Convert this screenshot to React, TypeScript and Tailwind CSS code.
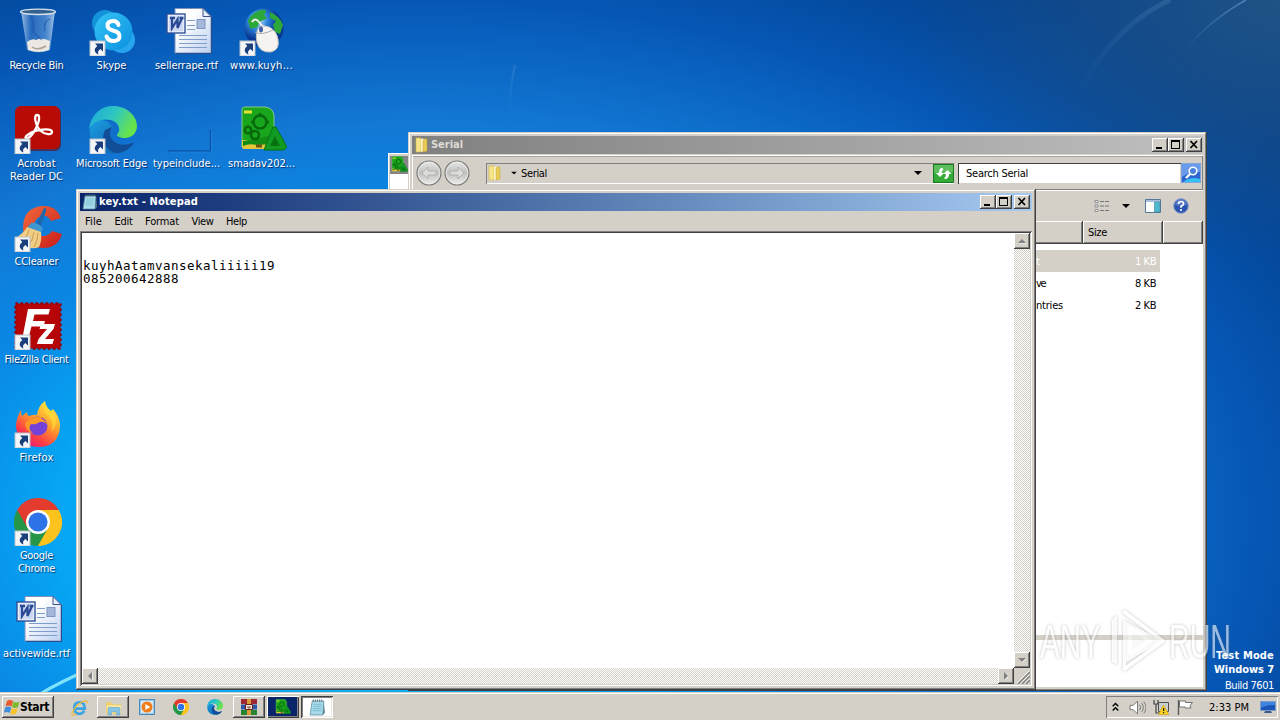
import { useLayoutEffect, useRef, type ReactNode } from "react";

const ui = "font-['DejaVu_Sans_Condensed','DejaVu_Sans',sans-serif] [font-stretch:condensed]";
const raised = "bg-[#d4d0c8] shadow-[inset_-1px_-1px_#404040,inset_1px_1px_#fff,inset_-2px_-2px_#808080]";
const sunken = "shadow-[inset_1px_1px_#808080,inset_-1px_-1px_#fff]";
const frame = "bg-[#d4d0c8] p-1 shadow-[inset_-1px_-1px_#404040,inset_1px_1px_#d4d0c8,inset_-2px_-2px_#808080,inset_2px_2px_#fff]";
const checker = "bg-[repeating-conic-gradient(#d4d0c8_0_25%,#fff_0_50%)] bg-[length:2px_2px]";

/* Text whose letter spacing is adjusted so that it spans w pixels. */
function Fit({ w, children, className = "" }: { w: number; children: string; className?: string }) {
  const ref = useRef<HTMLSpanElement>(null);
  useLayoutEffect(() => {
    const el = ref.current;
    if (!el) return;
    el.style.letterSpacing = "0px";
    const natural = el.getBoundingClientRect().width;
    el.style.letterSpacing = `${(w - natural) / children.length}px`;
  }, [w, children]);
  return (
    <span ref={ref} className={`inline-block shrink-0 whitespace-pre ${className}`}>
      {children}
    </span>
  );
}

function Shortcut() {
  return (
    <g transform="translate(1 33)">
      <rect width="15" height="15" fill="#f4f6f8" stroke="#b9c2cc" strokeWidth="1" />
      <path d="M5 2.5h8v8l-2.6-2.4C8.2 9.6 7.6 11 8.400 13.500 4 12 3.500 8 7.300 5.100z" fill="#1b3f7d" />
    </g>
  );
}

function RecycleBin() {
  return (
    <svg viewBox="0 0 48 48" className="size-12">
      <defs>
        <linearGradient id="bin" x1="0" x2="1">
          <stop offset="0" stopColor="#c3dcf3" stopOpacity=".8" />
          <stop offset=".3" stopColor="#3a78c8" stopOpacity=".6" />
          <stop offset=".7" stopColor="#7fb0e4" stopOpacity=".5" />
          <stop offset="1" stopColor="#b9d6f2" stopOpacity=".85" />
        </linearGradient>
      </defs>
      <path d="M7 3h34l-5 39q-11 5-23 0z" fill="url(#bin)" />
      <path d="M13 34q5-4 9-2 6-3 14 1l-1 9q-11 4-21 0z" fill="#ece9e4" />
      <path d="M18 39q6 4 14-1" stroke="#a99f92" strokeWidth="1.500" fill="none" />
      <path d="M17 8q4 7 2 16l9 8M36 11q-7 2-5 12" stroke="#1d55a8" strokeWidth="1.500" fill="none" opacity=".6" />
      <ellipse cx="24" cy="3.800" rx="17.500" ry="2.700" fill="#34618f" stroke="#d6e0ea" strokeWidth="1.400" />
    </svg>
  );
}

function Skype() {
  return (
    <svg viewBox="0 0 48 48" className="size-12">
      <defs>
        <linearGradient id="sky" x1="0" x2="1" y2="1">
          <stop offset="0" stopColor="#35c5f5" />
          <stop offset="1" stopColor="#0a8fe0" />
        </linearGradient>
      </defs>
      <circle cx="16" cy="15" r="13" fill="#1593da" />
      <circle cx="33" cy="32" r="13" fill="#27a6ee" />
      <circle cx="24.500" cy="23.500" r="19" fill="url(#sky)" />
      <path d="M29.500 17q-1-4-5.500-4-5.500 0-5.500 4.500 0 3.500 5.500 5 6.500 1.500 6.500 5.500 0 5-6 5-5.500 0-7-4.500" fill="none" stroke="#fff" strokeWidth="4" strokeLinecap="round" />
      <Shortcut />
    </svg>
  );
}

function WordDoc() {
  return (
    <svg viewBox="0 0 48 48" className="size-12">
      <defs>
        <linearGradient id="page" x1="0" x2="1" y2="1">
          <stop offset=".3" stopColor="#fff" />
          <stop offset="1" stopColor="#bccff0" />
        </linearGradient>
      </defs>
      <path d="M11 .5h28l8 8V45H11z" fill="url(#page)" stroke="#7d93bd" />
      <path d="M39 .5v8h8z" fill="#e6eefb" stroke="#3c5588" />
      <path d="M47.500 9v36.500H12" stroke="#2c4c8a" fill="none" />
      <path d="M23 12.500h8M23 17.500h8M23 21.500h8M15 27.500h28M15 31.500h28M15 35.500h28M15 39.500h28" stroke="#7f9fc9" />
      <rect x="33" y="11.500" width="8" height="9" fill="#a5b8dc" stroke="#7f95c0" />
      <rect x="3" y="6" width="18" height="19" fill="#fff" stroke="#2e4f9a" strokeWidth="1.400" />
      <rect x="4.500" y="7.500" width="15" height="16" fill="#cdd9f1" />
      <path d="M6 10h5M8 10l0 10 5.500-8.500v8.500l4.500-10M15.500 10h4" stroke="#2b4a96" strokeWidth="2.300" fill="none" />
    </svg>
  );
}

function GlobeMouse() {
  return (
    <svg viewBox="0 0 48 48" className="size-12">
      <defs>
        <radialGradient id="globe" cx=".35" cy=".3">
          <stop offset="0" stopColor="#bfe6ff" />
          <stop offset=".5" stopColor="#2b82d9" />
          <stop offset="1" stopColor="#0a3690" />
        </radialGradient>
      </defs>
      <circle cx="25" cy="20" r="19.500" fill="url(#globe)" />
      <path d="M9 13Q13 3 25 1.500q4 2 0 5l3 4-7 3-3 6-7 1zM31 4q10 4 13 13l-3 9-5-2-2-7 3-4-6-3z" fill="#2ca83b" />
      <path d="M13 14q3-5 7 0 3 5 8 5" stroke="#f0f0ec" strokeWidth="2" fill="none" />
      <path d="M20 19q5-2 10 0 7 3 9 12 2 11-7 13-11 1-14-9-2-10 2-16z" fill="#f4f3f0" stroke="#c4c2c0" />
      <path d="M16 24q6 4 18-2" stroke="#aaa" fill="none" />
      <ellipse cx="22" cy="21.500" rx="2" ry="3" fill="#4263a8" />
      <Shortcut />
    </svg>
  );
}

function Acrobat() {
  return (
    <svg viewBox="0 0 48 48" className="size-12">
      <rect x="2" y="1" width="45" height="44" rx="6" fill="#6e0906" opacity=".6" />
      <rect x="1" y="0" width="45" height="43" rx="6" fill="#b80b05" />
      <path d="M23 9c-4 0-1 12 4 16 4 4 11 4 11 1 0-5-18-2-23 2-5 3-4 5-1 4 5-2 12-16 11-21 0-1-1-2-2-2z" fill="none" stroke="#fff" strokeWidth="2.300" strokeLinejoin="round" />
      <Shortcut />
    </svg>
  );
}

function Edge({ small = false }: { small?: boolean }) {
  return (
    <svg viewBox="0 0 48 48" className={small ? "size-4" : "size-12"}>
      <defs>
        <linearGradient id="edgeTop" x1="0" x2="1" y2=".4">
          <stop offset="0" stopColor="#1aa7dd" />
          <stop offset=".55" stopColor="#2fc7c0" />
          <stop offset="1" stopColor="#67e34c" />
        </linearGradient>
        <linearGradient id="edgeLow" x1="0" x2="1" y1="0" y2="1">
          <stop offset="0" stopColor="#1b9de2" />
          <stop offset="1" stopColor="#0c59a4" />
        </linearGradient>
      </defs>
      <path d="M1 22C-1 36 10 47.500 24 47.500c9 0 15-3 20-9 1-1 0-2-1-1-12 5-22-2-22-9 0-5 3-7 3-7C18 12 5 11 1 22z" fill="url(#edgeLow)" />
      <path d="M16 24c-5 10 1 22 13 23 7-1 12-5 15-9 1-1 0-2-1-1-12 5-22-2-22-9 0-4 2-6 2-7z" fill="#124e97" />
      <path d="M0 23C2 8 12 0 24 0c14 0 24 10 24 20 0 7-5 12-12 12-5 0-8-2-8-3s3-3 2-7C29 12 8 9 0 23z" fill="url(#edgeTop)" />
      {!small && <Shortcut />}
    </svg>
  );
}

function GhostIcon() {
  return (
    <svg viewBox="0 0 48 48" className="size-12">
      <path d="M46.500 24v21H4" fill="none" stroke="#0751a8" strokeWidth="1.300" />
      <path d="M47.500 25v21H5" fill="none" stroke="#2a8ce0" strokeWidth=".6" />
    </svg>
  );
}

function Smadav({ className = "size-12" }: { className?: string }) {
  return (
    <svg viewBox="0 0 48 48" className={className}>
      <path d="M3 3q0-2 3-2h20q9 1 9 10v31H5q-3 0-2-4z" fill="#19a51c" stroke="#85c888" />
      <path d="M3 34h25v9H5q-2 0-2-3z" fill="#e5c73c" />
      <path d="M4 35q15-2 25-5l5 2v6l-16 1q-8-2-14 1z" fill="#118d16" />
      <g fill="none" stroke="#08680c" strokeWidth="2.500">
        <circle cx="21" cy="16" r="6.500" />
        <circle cx="9" cy="24" r="3.200" />
        <circle cx="16" cy="29" r="4" />
        <path d="M21 7v3M12 16h3M27 16h3" />
      </g>
      <path d="M5 6h8" stroke="#e9df37" strokeWidth="3" />
      <path d="M25 44 34 21h3l11 20-3 3z" fill="#119b22" stroke="#087011" />
      <path d="M31 40l5-10 5 10z" fill="#08720f" />
      <path d="M17 40h6" stroke="#6d5310" strokeWidth="3" />
    </svg>
  );
}

function CCleaner() {
  return (
    <svg viewBox="0 0 48 48" className="size-12">
      <defs>
        <linearGradient id="cc" x1="0" x2="1" y2="1">
          <stop offset="0" stopColor="#f26a3c" />
          <stop offset="1" stopColor="#c91c18" />
        </linearGradient>
      </defs>
      <path d="M47 14 37 17q-3-6-9-5-8 2-8 11 1 9 9 9 6 0 9-5l10 3q-4 14-19 14-19-1-20-20Q9 4 28 2q14-1 19 12z" fill="url(#cc)" />
      <path d="M30 4q3 0 2 3l-6 18-5-2z" fill="#1f68ac" />
      <path d="M17 19q6-1 12 5l-2 5-14-5z" fill="#3f97d0" />
      <path d="M13 23 27 28q1 9-2 15-4 2-9 1Q8 42 1 34q8-4 12-11z" fill="#f1cc85" />
      <path d="M15 26q-2 8-8 11M20 28q-1 9-6 14M24 29q0 8-4 14" stroke="#c99b50" fill="none" />
      <Shortcut />
    </svg>
  );
}

function FileZilla() {
  return (
    <svg viewBox="0 0 48 48" className="size-12">
      <rect x="1.500" y="1.500" width="45" height="45" fill="#b40406" stroke="#8d0305" strokeWidth="2.400" strokeDasharray="2.600 2.400" />
      <rect x="2.500" y="2.500" width="43" height="43" fill="#b50507" />
      <path d="M14 7h22l-1.500 5.500H20.500L19 19h12l-1.500 5.500H17.500L14 38H8zM27 22h14l-1.500 5L31 37h9l-1.500 5H23l1.500-5 8.500-10h-7.500z" fill="#fff" />
      <Shortcut />
    </svg>
  );
}

function Firefox() {
  return (
    <svg viewBox="0 0 48 48" className="size-12">
      <defs>
        <linearGradient id="fox" x1=".8" x2=".2" y1="0" y2="1">
          <stop offset="0" stopColor="#fff04a" />
          <stop offset=".4" stopColor="#ffa22b" />
          <stop offset=".75" stopColor="#ff3c46" />
          <stop offset="1" stopColor="#d91580" />
        </linearGradient>
      </defs>
      <path d="M7 10q0 4 1 6l5-4q0 3 2 4 5-2 8-1 1-9 8-14 1 7 6 10l2-2q7 8 7 17-1 21-22 21Q4 46 2 27q0-9 5-17z" fill="url(#fox)" />
      <circle cx="24" cy="26" r="9.500" fill="#7542d8" />
      <path d="M15 20q7-5 14-3-2 0-2 1 4 2 6 6-5-4-9-1-3 2-7 1-4 5 2 9-8-2-8-10z" fill="#ff9926" />
      <path d="M31 4q-2 7 3 12 7 7 3 16 9-10 2-20-6-3-8-8z" fill="#ffd936" opacity=".75" />
      <Shortcut />
    </svg>
  );
}

function Chrome({ small = false }: { small?: boolean }) {
  return (
    <svg viewBox="0 0 48 48" className={small ? "size-4" : "size-12"}>
      <path d="M24 24 3.200 12A24 24 0 0 1 44.800 12z" fill="#e33b2e" />
      <path d="M24 24 44.800 12A24 24 0 0 1 24 48z" fill="#fcc31e" />
      <path d="M24 24 24 48A24 24 0 0 1 3.200 12z" fill="#269746" />
      <path d="M24 12h20.800L40 24 24 24z" fill="#fcc31e" />
      <path d="M3.200 12 13.600 30 24 24 24 12 18 8z" fill="#e33b2e" />
      <path d="M34.400 30 24 48 15 46 13.600 30z" fill="#269746" />
      <path d="M34.400 30 24 48 31 47 40 41 42 20z" fill="#fcc31e" />
      <circle cx="24" cy="24" r="12" fill="#fff" />
      <circle cx="24" cy="24" r="9.600" fill="#2f73e8" />
      {!small && <Shortcut />}
    </svg>
  );
}

type Item = { cell: string; icon: ReactNode; lines: [string, number][]; wide?: boolean };
const items: Item[] = [
  { cell: "col-start-1 row-start-1", icon: <RecycleBin />, lines: [["Recycle Bin", 54]] },
  { cell: "col-start-2 row-start-1", icon: <Skype />, lines: [["Skype", 30]] },
  { cell: "col-start-3 row-start-1", icon: <WordDoc />, lines: [["sellerrape.rtf", 63]] },
  { cell: "col-start-4 row-start-1", icon: <GlobeMouse />, lines: [["www.kuyh...", 63]] },
  { cell: "col-start-1 row-start-2", icon: <Acrobat />, lines: [["Acrobat", 38], ["Reader DC", 53]] },
  { cell: "col-start-2 row-start-2", icon: <Edge />, lines: [["Microsoft Edge", 71]] },
  { cell: "col-start-3 row-start-2", icon: <GhostIcon />, lines: [["typeinclude...", 67]] },
  { cell: "col-start-4 row-start-2", icon: <Smadav />, lines: [["smadav202...", 67]] },
  { cell: "col-start-1 row-start-3", icon: <CCleaner />, lines: [["CCleaner", 44]] },
  { cell: "col-start-1 row-start-4", icon: <FileZilla />, lines: [["FileZilla Client", 64]] },
  { cell: "col-start-1 row-start-5", icon: <Firefox />, lines: [["Firefox", 34]] },
  { cell: "col-start-1 row-start-6", icon: <Chrome />, lines: [["Google", 33], ["Chrome", 37]] },
  { cell: "col-start-1 row-start-7", icon: <WordDoc />, lines: [["activewide.rtf", 67]] },
];

function Desktop() {
  return (
    <div className="-ml-px grid w-[300px] grid-cols-[repeat(4,75px)] grid-rows-[repeat(7,98px)] pt-2">
      {items.map((it) => (
        <div key={it.lines[0][0]} className={`flex flex-col items-center ${it.cell}`}>
          <div className="h-[50.500px] pl-[2px]">{it.icon}</div>
          {it.lines.map(([t, w]) => (
            <Fit key={t} w={w} className="h-[13px] leading-[13px] text-white [text-shadow:1px_1px_1px_rgba(0,20,70,.75)]">
              {t}
            </Fit>
          ))}
        </div>
      ))}
    </div>
  );
}

function Captions() {
  const b = `flex h-[14px] w-4 items-center justify-center ${raised}`;
  return (
    <div className="ml-auto flex">
      <div className={b}>
        <svg viewBox="0 0 16 14" className="h-[14px] w-4"><path d="M4 9h6v2H4z" /></svg>
      </div>
      <div className={b}>
        <svg viewBox="0 0 16 14" className="h-[14px] w-4" shapeRendering="crispEdges"><path fillRule="evenodd" d="M3 2h9v9H3zM4 4h7v6H4z" /></svg>
      </div>
      <div className={`ml-[2px] ${b}`}>
        <svg viewBox="0 0 16 14" className="h-[14px] w-4"><path d="M4.500 3 11 10M11 3 4.500 10" stroke="#000" strokeWidth="1.700" /></svg>
      </div>
    </div>
  );
}

function Folder() {
  return (
    <svg viewBox="0 0 16 16" className="size-4 shrink-0">
      <path d="M2 1h5v14H2z" fill="#f5e489" stroke="#d0b344" strokeWidth=".6" />
      <path d="M7 2q2-1 3 0v12l-3 1z" fill="#fdf6c5" />
      <path d="M10 2h3v12l-4 1V4z" fill="#e8ca55" stroke="#c6a63b" strokeWidth=".5" />
    </svg>
  );
}

function NoteIcon({ className = "size-4" }: { className?: string }) {
  return (
    <svg viewBox="0 0 16 16" className={`shrink-0 ${className}`}>
      <path d="M3 2h11l-1 13H1z" fill="#a9dcea" stroke="#55889b" strokeWidth=".7" />
      <path d="M4 5h8M4 7h8M3.500 9h8M3.500 11h8" stroke="#6fb4cb" strokeWidth=".7" />
      <path d="M4 .5v2M6 .5v2M8 .5v2M10 .5v2M12 .5v2" stroke="#5f7680" />
      <path d="M14 3 15 13 13 15z" fill="#5a8493" />
    </svg>
  );
}

function Arrow({ dir }: { dir: "u" | "d" | "l" | "r" }) {
  const d = { u: "M4 10h8l-4-4z", d: "M4 6h8l-4 4z", l: "M10 4v8l-4-4z", r: "M6 4v8l4-4z" }[dir];
  return (
    <div className={`size-4 shrink-0 ${raised}`}>
      <svg viewBox="0 0 16 16" className="size-4">
        <path d={d} fill="#fff" transform="translate(.6 .6)" />
        <path d={d} fill="#808080" />
      </svg>
    </div>
  );
}

function Down({ className = "" }: { className?: string }) {
  return <svg viewBox="0 0 8 4" className={`h-1 w-2 shrink-0 ${className}`}><path d="M0 0h8L4 4z" /></svg>;
}

function NavButton({ flip = false }: { flip?: boolean }) {
  return (
    <svg viewBox="0 0 28 28" className="size-7">
      <defs>
        <linearGradient id="nav" x2="0" y2="1">
          <stop offset="0" stopColor="#e9e9e7" />
          <stop offset=".5" stopColor="#bfbfbd" />
          <stop offset="1" stopColor="#efefed" />
        </linearGradient>
      </defs>
      <circle cx="14" cy="14" r="12" fill="url(#nav)" stroke="#7c7c7a" strokeWidth="1.200" />
      <circle cx="14" cy="14" r="10.800" fill="none" stroke="#f2f2f0" strokeWidth=".7" />
      <path d="M7 14l6-6v4h8v4h-8v4z" fill="#dcdcda" stroke="#b0b0ae" transform={flip ? "rotate(180 14 14)" : undefined} />
    </svg>
  );
}

function Explorer() {
  return (
    <div className={`absolute left-[408px] top-[132px] flex h-[559px] w-[799px] flex-col ${frame}`}>
      <div className="flex h-[18px] shrink-0 items-center bg-linear-to-r from-[#808080] to-[#c0c0c0] pl-[2px] pr-px">
        <Folder />
        <Fit w={32} className="ml-px font-bold leading-[18px] text-[#dedbd5]">Serial</Fit>
        <Captions />
      </div>
      <div className="mt-px flex h-[35px] shrink-0 items-center pl-[3px] pr-px pt-px shadow-[inset_1px_1px_#fff,inset_-1px_-1px_#808080,inset_0_2px_#a7a39b,0_1px_#fff]">
        <NavButton />
        <NavButton flip />
        <div className={`ml-[15px] flex h-[21px] w-[468px] items-center pl-px ${sunken}`}>
          <Folder />
          <Down className="ml-[7px] scale-75" />
          <Fit w={26} className="ml-[3px]">Serial</Fit>
          <Down className="ml-auto" />
          <svg viewBox="0 0 21 19" className="ml-[11px] h-[19px] w-[21px]">
            <rect x=".5" y=".5" width="20" height="18" fill="#35aa38" stroke="#187a1b" />
            <path d="M1 1h19v7q-10 4-19 1z" fill="#7acb78" opacity=".6" />
            <path d="M9 4q-3 0-3 5H3l4 4 4-4H8.500q0-2 2-4zM12 15q4 0 4-5h2.500l-4-4-4 4H13q0 3-2 4z" fill="#fff" />
          </svg>
        </div>
        <div className="ml-1 flex h-[21px] w-[223px] items-center bg-white pl-2 shadow-[inset_1px_1px_#404040,inset_-1px_-1px_#d4d0c8]">
          <Fit w={62}>Search Serial</Fit>
        </div>
        <svg viewBox="0 0 20 20" className="size-5">
          <rect x=".5" y=".5" width="19" height="19" fill="#2c65d2" stroke="#7fa3dd" />
          <path d="M1 1h18v8Q9 8 1 14z" fill="#699bea" />
          <path d="M2 19q8-6 17-3v3z" fill="#36c0ee" />
          <circle cx="12" cy="8" r="3.800" fill="#4780dd" stroke="#fff" strokeWidth="1.600" />
          <path d="M9 11l-4 4" stroke="#fff" strokeWidth="2.400" />
        </svg>
      </div>
      <div className="flex h-[31px] shrink-0 items-center justify-end pr-[14px]">
        <svg viewBox="0 0 16 14" className="h-[14px] w-4">
          <path d="M1 1.500h3v2H1zM1 6h3v2H1zM1 10.500h3v2H1z" fill="#fff" stroke="#73777c" strokeWidth=".8" />
          <path d="M6 2.500h4M11 2.500h4M6 7h4M11 7h4M6 11.500h4M11 11.500h4" stroke="#73777c" strokeWidth="1" />
        </svg>
        <Down className="ml-3" />
        <svg viewBox="0 0 16 14" className="ml-[15px] h-[14px] w-4">
          <path d="M.5.5h15v13H.5z" fill="#fff" stroke="#53789b" />
          <path d="M1 1h14v2H1z" fill="#a8bfdb" />
          <path d="M9.500 3h5.500v10H9.500z" fill="#4fb9cf" stroke="#46839f" strokeWidth=".6" />
        </svg>
        <svg viewBox="0 0 16 16" className="ml-3 size-4">
          <circle cx="8" cy="8" r="7.300" fill="#2b53b0" stroke="#8298c6" />
          <path d="M2 7a6 6 0 0 1 12 0q-6 2-12 0z" fill="#7290d5" opacity=".6" />
          <path d="M5.500 6q0-2.500 2.600-2.500 2.400 0 2.400 2.200Q10.500 7 8 8.500v1.200" fill="none" stroke="#fff" strokeWidth="1.700" />
          <circle cx="8" cy="12" r="1.100" fill="#fff" />
        </svg>
      </div>
      <div className="flex h-[23px] shrink-0 justify-end leading-[23px]">
        <div className={`grow ${raised}`} />
        <div className={`w-20 pl-[5px] ${raised}`}><Fit w={19}>Size</Fit></div>
        <div className={`w-10 ${raised}`} />
      </div>
      <div className="flex grow flex-col bg-white pl-[624px] pt-[6px]">
        {[["t", "1 KB", 5, 21], ["ve", "8 KB", 9, 21], ["ntries", "2 KB", 27, 21]].map(([name, size, nw, sw], i) => (
          <div
            key={size}
            className={`flex h-[22px] w-[124px] items-center justify-between pr-[4px] ${i === 0 ? "bg-[#d4d0c8] text-white" : ""}`}
          >
            <Fit w={nw as number}>{name as string}</Fit>
            <Fit w={sw as number}>{size as string}</Fit>
          </div>
        ))}
      </div>
      <div className="h-[5px] shrink-0 bg-[#d4d0c8]" />
      <div className="h-[47px] shrink-0 bg-white" />
    </div>
  );
}

const menu: [string, number][] = [["File", 17], ["Edit", 18], ["Format", 34], ["View", 22], ["Help", 21]];

function Notepad() {
  return (
    <div className={`absolute left-[76px] top-[189px] flex h-[501px] w-[960px] flex-col ${frame}`}>
      <div className="flex h-[18px] shrink-0 items-center bg-linear-to-r from-[#0a246a] to-[#a6caf0] pl-[2px] pr-[2px]">
        <NoteIcon />
        <Fit w={99} className="ml-px font-bold leading-[18px] text-white">key.txt - Notepad</Fit>
        <Captions />
      </div>
      <div className="flex h-5 shrink-0 items-center gap-[12.500px] pl-[5px]">
        {menu.map(([t, w]) => <Fit key={t} w={w}>{t}</Fit>)}
      </div>
      <div className="flex min-h-0 grow flex-col p-[2px] shadow-[inset_1px_1px_#808080,inset_-1px_-1px_#fff,inset_2px_2px_#404040,inset_-2px_-2px_#d4d0c8]">
        <div className="flex min-h-0 grow">
          <div className="grow bg-white pl-px pt-[26px] font-['DejaVu_Sans_Mono',monospace] text-[12.500px] leading-[13px]">
            <div><Fit w={192}>kuyhAatamvansekaliiiii19</Fit></div>
            <div><Fit w={96}>085200642888</Fit></div>
          </div>
          <div className={`flex w-4 flex-col justify-between ${checker}`}>
            <Arrow dir="u" />
            <Arrow dir="d" />
          </div>
        </div>
        <div className="flex h-4 shrink-0">
          <div className={`flex grow justify-between ${checker}`}>
            <Arrow dir="l" />
            <Arrow dir="r" />
          </div>
          <svg viewBox="0 0 16 16" className="size-4 bg-[#d4d0c8]">
            <path d="M4 16 16 4M8 16l8-8M12 16l4-4" stroke="#808080" strokeWidth="1.500" />
            <path d="M3 15 15 3M7 15l8-8M11 15l4-4" stroke="#fff" strokeWidth=".8" />
          </svg>
        </div>
      </div>
    </div>
  );
}

function BackWindow() {
  return (
    <div className="absolute left-[388px] top-[153px] h-[300px] w-[300px] bg-[#d4d0c8] pl-[2px] pt-[3px] shadow-[inset_1px_1px_#fff]">
      <div className="h-[18px] bg-[#858585] pl-px"><Smadav className="size-[17px]" /></div>
      <div className="h-[270px] bg-white" />
    </div>
  );
}

function Watermark() {
  return (
    <svg viewBox="0 0 196 68" className="absolute left-[1038px] top-[607px] h-[68px] w-[196px] opacity-60 drop-shadow-[0_0_1.500px_rgba(80,80,80,.6)]">
      <g fill="#fff" fontFamily="'Liberation Sans Narrow','Liberation Sans',sans-serif">
        <text transform="translate(2 51) scale(.62 1)" fontSize="49" textLength="98" lengthAdjust="spacingAndGlyphs">ANY</text>
        <text transform="translate(131 51) scale(.62 1)" fontSize="49" textLength="100" lengthAdjust="spacingAndGlyphs">RUN</text>
      </g>
      <path d="M79 8v49l6 4V13l40 21-37 21v7L74 55V13z" fill="#fff" opacity=".9" />
      <path d="M85 4 125 34 85 63M92 21v26l20-13z" fill="none" stroke="#fff" strokeWidth="4" strokeLinejoin="round" />
    </svg>
  );
}

function WinFlag() {
  return (
    <svg viewBox="0 0 16 16" className="size-4 shrink-0">
      <path d="M3 2q3-2 6 0L7.500 7.500q-3-2-6 0z" fill="#e9572b" />
      <path d="M9.500 2.500q3 2 6 0L14 8q-3 2-6 0z" fill="#7db928" />
      <path d="M1.200 8.500q3-2 6 0L5.800 14q-3-2-6 0z" fill="#3f8fdc" />
      <path d="M7.800 9q3 2 6 0l-1.500 5.500q-3 2-6 0z" fill="#f9c12c" />
    </svg>
  );
}

function Taskbar() {
  const slot = "flex h-[22px] items-center justify-center";
  return (
    <div className="absolute inset-x-0 bottom-0 flex h-7 items-center bg-[#d4d0c8] pl-[2px] pr-[2px] pt-[2px] shadow-[inset_0_1px_#d4d0c8,inset_0_2px_#fff]">
      <div className={`flex h-[22px] w-[52px] items-center pl-[2px] ${raised}`}>
        <WinFlag />
        <Fit w={29} className="text-[12px] font-bold">Start</Fit>
      </div>
      <div className={`ml-[9px] w-8 ${slot}`}>
        <svg viewBox="0 0 18 16" className="h-[17px] w-[19px]">
          <path d="M13.500 11q-2 3-4.500 3-5 0-5-5.500T9 3q5 0 5 6H5" fill="none" stroke="#3ba4e4" strokeWidth="2.500" />
          <path d="M16 4q1-3-2-2-5 1-9 6-4 6-3 7 1 1 4-1" fill="none" stroke="#efbd35" strokeWidth="1.200" />
        </svg>
      </div>
      <div className={`ml-[2px] w-8 ${slot} ${raised}`}>
        <svg viewBox="0 0 16 16" className="size-[17px]">
          <path d="M1 3h5l1 2h8v9H1z" fill="#edce6c" />
          <path d="M2 6h13v7H2z" fill="#f9e9a5" />
          <path d="M3 15V9q0-1 1-1h9q1 0 1 1v6h-3v-3H6v3z" fill="#83c6e8" stroke="#5199c5" strokeWidth=".5" />
        </svg>
      </div>
      <div className={`ml-[2px] w-8 ${slot}`}>
        <svg viewBox="0 0 16 16" className="size-4">
          <rect x=".5" y=".5" width="15" height="15" fill="#9ccbe9" stroke="#4a8bbd" />
          <rect x="2" y="2" width="12" height="12" fill="#d8e9f3" />
          <circle cx="8" cy="8" r="5.500" fill="#f07d17" />
          <path d="M6.300 5v6l5-3z" fill="#fff" />
        </svg>
      </div>
      <div className={`ml-[2px] w-8 ${slot}`}><Chrome small /></div>
      <div className={`ml-[2px] w-8 ${slot}`}><Edge small /></div>
      <div className={`ml-[2px] w-8 ${slot} ${raised}`}>
        <svg viewBox="0 0 16 16" className="size-4">
          <path d="M0 0h16v5H0z" fill="#9e2733" />
          <path d="M0 5.500h16v5H0z" fill="#2d56a6" />
          <path d="M0 11h16v5H0z" fill="#268433" />
          <path d="M6 0h4v16H6z" fill="#d99a3a" />
          <path d="M4.500 5.500h7v5h-7z" fill="#f4e9e0" stroke="#642020" />
          <path d="M7 7v2h2V7" fill="none" stroke="#8a4630" />
        </svg>
      </div>
      <div className={`ml-[2px] w-8 ${slot} bg-[#0a246a] shadow-[inset_1px_1px_#fff,inset_-1px_-1px_#404040,inset_-2px_-2px_#808080]`}>
        <Smadav className="size-4" />
      </div>
      <div className={`ml-[2px] w-8 ${slot} bg-white shadow-[inset_1px_1px_#404040,inset_-1px_-1px_#fff,inset_2px_2px_#808080,inset_-2px_-2px_#ece9e4]`}>
        <NoteIcon className="size-[17px]" />
      </div>
      <div className={`ml-auto flex h-[22px] w-[172px] items-center pl-[6px] pr-[2px] ${sunken}`}>
        <svg viewBox="0 0 7 10" className="h-[10px] w-[7px]">
          <path d="M.7 4.300 3.500 1.500l2.800 2.800M.7 8.500l2.800-2.800 2.800 2.800" fill="none" stroke="#000" strokeWidth="1.400" />
        </svg>
        <svg viewBox="0 0 16 14" className="ml-[10px] h-[15px] w-[17px]">
          <path d="M1 5h3l4-4v12L4 9H1z" fill="#fff" stroke="#666" strokeWidth=".8" />
          <path d="M10 4.500q2 2.500 0 5M12 3q3 4 0 8M14 1.500q4 5.500 0 11" stroke="#777" strokeWidth=".9" fill="none" />
        </svg>
        <svg viewBox="0 0 16 16" className="ml-[7px] size-4">
          <path d="M5.500 3.500h10v9h-10z" fill="#c9ccd0" stroke="#4c4c4c" />
          <path d="M1 1v4h4V1M3 5v9h4" stroke="#444" strokeWidth="1.200" fill="none" />
          <path d="M10.500 6 15.800 15.500H5.500z" fill="#ffd51c" stroke="#c79710" strokeWidth=".6" />
          <path d="M10.600 9v3M10.600 13v1.300" stroke="#222" strokeWidth="1.300" />
        </svg>
        <svg viewBox="0 0 16 16" className="ml-2 size-4">
          <path d="M1.500 1v15" stroke="#555" strokeWidth="1.300" />
          <path d="M2.500 2h6v1.500h7L13 6.500l1 2.500H8V8H2.500z" fill="#fff" stroke="#666" strokeWidth=".9" />
        </svg>
        <Fit w={40} className="ml-[16px]">2:33 PM</Fit>
        <svg viewBox="0 0 16 14" className="ml-auto h-[14px] w-4">
          <path d="M.5 1.500h15v9H.5z" fill="#1b55b5" stroke="#7f9bc8" />
          <path d="M1 2h14v3Q6 5 1 8z" fill="#3f85df" />
          <path d="M5 11h6l1 2H4z" fill="#3b5a8c" />
        </svg>
      </div>
    </div>
  );
}

export default function App() {
  return (
    <div
      className={`relative h-[720px] w-[1280px] overflow-hidden text-[11px] leading-[13px] text-black ${ui} bg-[radial-gradient(ellipse_380px_260px_at_1280px_0px,rgba(34,84,132,.9),rgba(10,70,140,0)),radial-gradient(ellipse_900px_560px_at_420px_520px,#20c4f5_0%,#06a6f4_40%,#0a86e4_56%,#1278d4_71%,#0657b5_93%,#044a9f_105%,#04418f_118%)]`}
    >
      <svg viewBox="0 0 1280 720" className="absolute inset-0 h-[720px] w-[1280px]">
        <defs>
          <linearGradient id="ray" x1="0" y1="1" x2="1" y2="0">
            <stop offset="0" stopColor="#6fb4ea" stopOpacity="0" />
            <stop offset="1" stopColor="#8fc0ea" stopOpacity=".4" />
          </linearGradient>
        </defs>
        <path d="M1185 50Q1210 20 1246 0" fill="none" stroke="url(#ray)" strokeWidth="2" />
        <path d="M1080 90Q1115 25 1170 0" fill="none" stroke="url(#ray)" strokeWidth="5" opacity=".4" />
        <path d="M510 130Q508 95 515 65" fill="none" stroke="url(#ray)" strokeWidth="2" opacity=".5" />
        <path d="M40 694Q60 682 90 669" fill="none" stroke="#7fe4fb" strokeWidth="3" />
      </svg>
      <Desktop />
      <div className="absolute bottom-[28px] right-[6px] flex flex-col items-end text-white">
        <Fit w={58} className="h-[14px] font-bold">Test Mode</Fit>
        <Fit w={60} className="h-[16px] font-bold">Windows 7</Fit>
        <Fit w={49} className="h-[13px]">Build 7601</Fit>
      </div>
      <BackWindow />
      <Explorer />
      <Notepad />
      <Watermark />
      <Taskbar />
    </div>
  );
}
